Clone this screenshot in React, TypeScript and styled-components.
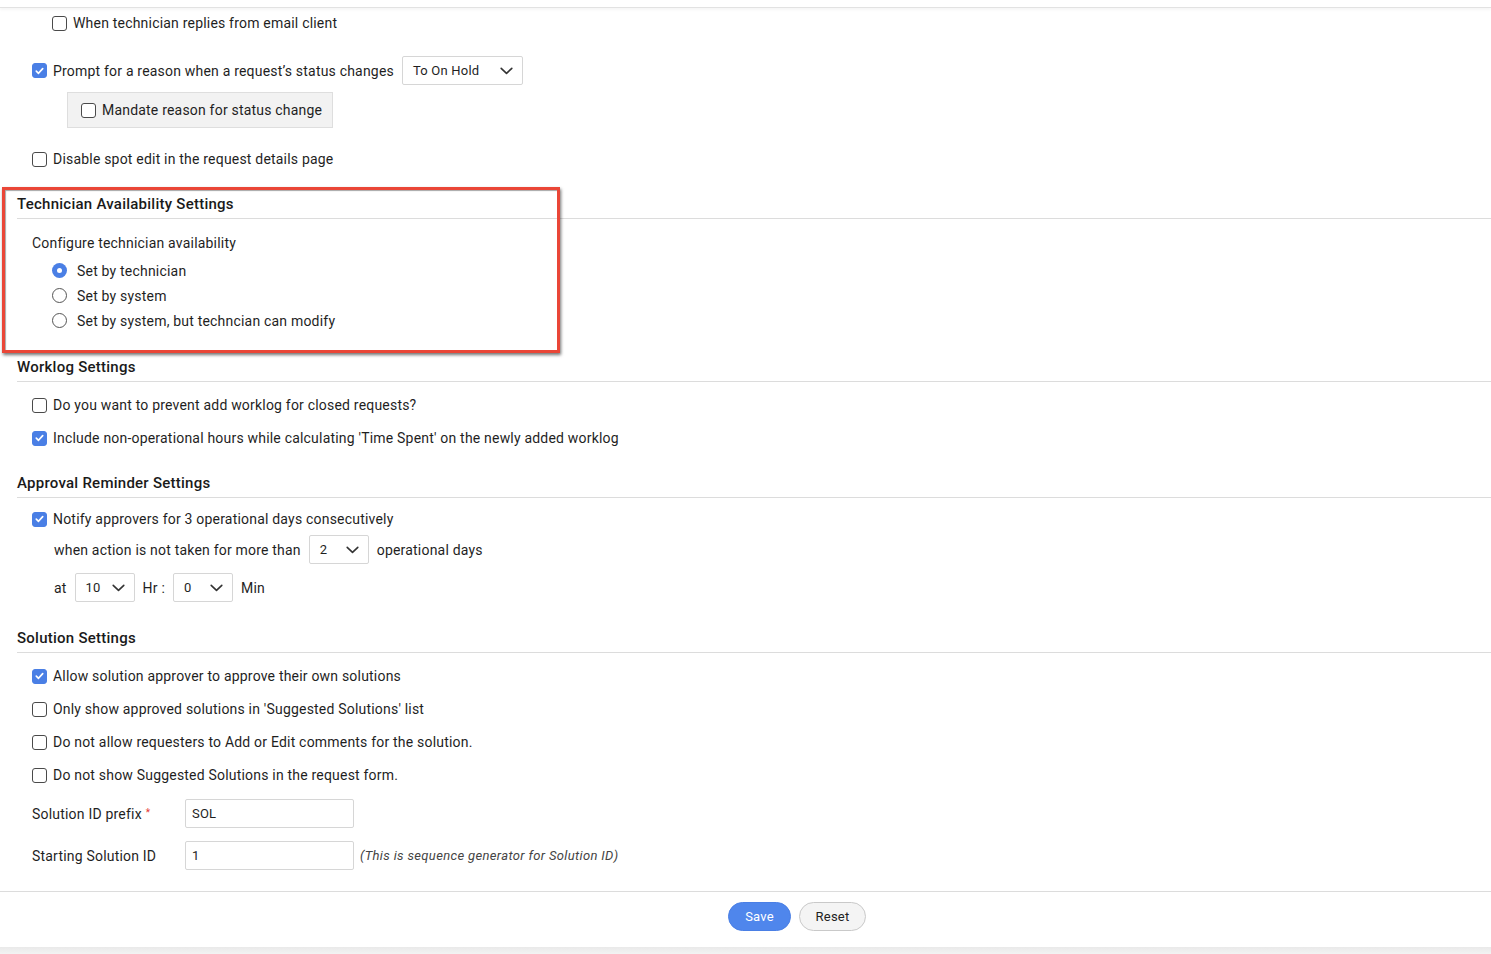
import React from "react";
import styled, { createGlobalStyle, css } from "styled-components";

const FONT = `"Roboto", "Noto Sans", sans-serif`;

const Global = createGlobalStyle`
  html, body { margin: 0; padding: 0; background: #fff; }
  body { font-family: ${FONT}; font-size: 14px; letter-spacing: 0.2px; color: #1f1f1f; }
  * { box-sizing: border-box; }
`;

const Page = styled.div`
  width: 1491px;
  height: 954px;
  overflow: hidden;
  display: flex;
  flex-direction: column;
  background: #fff;
`;

const TopRule = styled.div`
  flex: none;
  height: 8px;
  border-bottom: 1px solid #e2e2e2;
  box-shadow: 0 2px 3px rgba(0, 0, 0, 0.04);
`;

const Row = styled.div<{ $mt: number; $left: number; $h?: number; $gap?: number }>`
  flex: none;
  display: flex;
  align-items: center;
  margin-top: ${(p) => p.$mt}px;
  padding-left: ${(p) => p.$left}px;
  height: ${(p) => p.$h ?? 24}px;
  gap: ${(p) => p.$gap ?? 6}px;
  white-space: nowrap;
`;

const Label = styled.span<{ $ml?: number }>`
  margin-left: ${(p) => p.$ml ?? 0}px;
  line-height: 1;
`;

const Box = styled.span<{ $on?: boolean }>`
  width: 15px;
  height: 15px;
  border-radius: 3px;
  flex: none;
  display: inline-flex;
  align-items: center;
  justify-content: center;
  ${(p) =>
    p.$on
      ? css`
          background: #4a7fe5;
          border: 1px solid #4a7fe5;
        `
      : css`
          background: #fff;
          border: 1px solid #4a4a4a;
        `}
`;

const Check = ({ on }: { on?: boolean }) => (
  <Box $on={on}>
    {on && (
      <svg width="9" height="8" viewBox="0 0 9 8">
        <path d="M1.3 4.2 L3.5 6.3 L7.7 1.6" fill="none" stroke="#fff" strokeWidth="1.7" strokeLinecap="round" strokeLinejoin="round" />
      </svg>
    )}
  </Box>
);

const RadioDot = styled.span<{ $on?: boolean }>`
  width: 15px;
  height: 15px;
  border-radius: 50%;
  flex: none;
  display: inline-flex;
  align-items: center;
  justify-content: center;
  ${(p) =>
    p.$on
      ? css`
          background: #4a7fe5;
          &::after {
            content: "";
            width: 5px;
            height: 5px;
            border-radius: 50%;
            background: #fff;
          }
        `
      : css`
          border: 1px solid #555;
          background: #fff;
        `}
`;

const SubBox = styled.div`
  flex: none;
  margin-top: 7px;
  margin-left: 67px;
  width: 266px;
  height: 36px;
  background: #f2f2f2;
  border: 1px solid #dedede;
  display: flex;
  align-items: center;
  padding-left: 13px;
  gap: 6px;
`;

const SectionHead = styled.div<{ $mt: number }>`
  flex: none;
  margin-top: ${(p) => p.$mt}px;
  margin-left: 17px;
  height: 30px;
  border-bottom: 1px solid #dcdcdc;
  display: flex;
  align-items: center;
  font-size: 15px;
  font-weight: 500;
  letter-spacing: 0.25px;
  color: #1a1a1a;
`;

const Highlight = styled.div`
  flex: none;
  position: relative;
  margin-top: 18px;
`;

const RedFrame = styled.div`
  position: absolute;
  left: 2px;
  top: -2px;
  width: 558px;
  height: 166px;
  border: 3px solid #ea4637;
  box-shadow: 1px 2px 3px rgba(0, 0, 0, 0.55), inset 1px 1px 1px rgba(0, 0, 0, 0.35);
  pointer-events: none;
`;

const SelectBox = styled.div<{ $w: number }>`
  width: ${(p) => p.$w}px;
  height: 29px;
  border: 1px solid #d6d6d6;
  border-radius: 2px;
  background: #fff;
  display: flex;
  align-items: center;
  justify-content: space-between;
  padding: 0 9px 0 10px;
  font-size: 13px;
  flex: none;
`;

const Chevron = () => (
  <svg width="13" height="8" viewBox="0 0 13 8">
    <path d="M1.2 1.3 L6.5 6.4 L11.8 1.3" fill="none" stroke="#333" strokeWidth="1.6" strokeLinecap="round" strokeLinejoin="round" />
  </svg>
);

const Select = ({ w, value }: { w: number; value: string }) => (
  <SelectBox $w={w}>
    <span>{value}</span>
    <Chevron />
  </SelectBox>
);

const FieldRow = styled.div<{ $mt: number }>`
  flex: none;
  display: flex;
  align-items: center;
  margin-top: ${(p) => p.$mt}px;
  padding-left: 32px;
  height: 29px;
`;

const FieldLabel = styled.div`
  width: 153px;
  display: flex;
  align-items: center;
  gap: 4px;
`;

const Req = styled.span`
  color: #e53935;
  font-size: 10px;
  margin-top: -3px;
`;

const TextInput = styled.div`
  width: 169px;
  height: 29px;
  border: 1px solid #d6d6d6;
  border-radius: 2px;
  display: flex;
  align-items: center;
  padding-left: 6px;
  font-size: 13px;
`;

const Note = styled.span`
  margin-left: 6px;
  font-style: italic;
  font-size: 13px;
  letter-spacing: 0.35px;
  color: #444;
`;

const Footer = styled.div`
  flex: none;
  margin-top: 21px;
  border-top: 1px solid #dcdcdc;
  padding-top: 10px;
  padding-bottom: 16px;
  display: flex;
  justify-content: center;
  gap: 8px;
  padding-left: 103px;
`;

const Btn = styled.button<{ $primary?: boolean }>`
  height: 29px;
  border-radius: 15px;
  font-family: ${FONT};
  font-size: 13px;
  letter-spacing: 0.2px;
  padding: 0;
  ${(p) =>
    p.$primary
      ? css`
          width: 63px;
          background: #4f86ec;
          border: 1px solid #4a7fe5;
          color: #fff;
        `
      : css`
          width: 67px;
          background: #f4f4f4;
          border: 1px solid #c9c9c9;
          color: #222;
        `}
`;

const BottomBand = styled.div`
  flex: 1;
  background: linear-gradient(#e9e9e9, #f3f3f3);
`;

export default function App() {
  return (
    <>
      <Global />
      <Page>
        <TopRule />
        <Row $mt={3} $left={52}>
          <Check />
          <Label>When technician replies from email client</Label>
        </Row>
        <Row $mt={21} $left={32} $h={29}>
          <Check on />
          <Label>Prompt for a reason when a request’s status changes</Label>
          <Label $ml={2}>
            <Select w={121} value="To On Hold" />
          </Label>
        </Row>
        <SubBox>
          <Check />
          <Label>Mandate reason for status change</Label>
        </SubBox>
        <Row $mt={19} $left={32}>
          <Check />
          <Label>Disable spot edit in the request details page</Label>
        </Row>

        <Highlight>
          <RedFrame />
          <SectionHead $mt={0}>Technician Availability Settings</SectionHead>
          <Row $mt={12} $left={32}>
            <Label>Configure technician availability</Label>
          </Row>
          <Row $mt={3} $left={52} $h={25} $gap={10}>
            <RadioDot $on />
            <Label>Set by technician</Label>
          </Row>
          <Row $mt={0} $left={52} $h={25} $gap={10}>
            <RadioDot />
            <Label>Set by system</Label>
          </Row>
          <Row $mt={0} $left={52} $h={25} $gap={10}>
            <RadioDot />
            <Label>Set by system, but techncian can modify</Label>
          </Row>
        </Highlight>

        <SectionHead $mt={19}>Worklog Settings</SectionHead>
        <Row $mt={11} $left={32}>
          <Check />
          <Label>Do you want to prevent add worklog for closed requests?</Label>
        </Row>
        <Row $mt={9} $left={32}>
          <Check on />
          <Label>Include non-operational hours while calculating 'Time Spent' on the newly added worklog</Label>
        </Row>

        <SectionHead $mt={18}>Approval Reminder Settings</SectionHead>
        <Row $mt={9} $left={32}>
          <Check on />
          <Label>Notify approvers for 3 operational days consecutively</Label>
        </Row>
        <Row $mt={4} $left={54} $h={29} $gap={8}>
          <Label>when action is not taken for more than</Label>
          <Select w={60} value="2" />
          <Label>operational days</Label>
        </Row>
        <Row $mt={9} $left={54} $h={29} $gap={8}>
          <Label>at</Label>
          <Select w={60} value="10" />
          <Label>Hr :</Label>
          <Select w={60} value="0" />
          <Label>Min</Label>
        </Row>

        <SectionHead $mt={21}>Solution Settings</SectionHead>
        <Row $mt={11} $left={32}>
          <Check on />
          <Label>Allow solution approver to approve their own solutions</Label>
        </Row>
        <Row $mt={9} $left={32}>
          <Check />
          <Label>Only show approved solutions in 'Suggested Solutions' list</Label>
        </Row>
        <Row $mt={9} $left={32}>
          <Check />
          <Label>Do not allow requesters to Add or Edit comments for the solution.</Label>
        </Row>
        <Row $mt={9} $left={32}>
          <Check />
          <Label>Do not show Suggested Solutions in the request form.</Label>
        </Row>

        <FieldRow $mt={12}>
          <FieldLabel>
            <span>Solution ID prefix</span>
            <Req>*</Req>
          </FieldLabel>
          <TextInput>SOL</TextInput>
        </FieldRow>
        <FieldRow $mt={13}>
          <FieldLabel>
            <span>Starting Solution ID</span>
          </FieldLabel>
          <TextInput>1</TextInput>
          <Note>(This is sequence generator for Solution ID)</Note>
        </FieldRow>

        <Footer>
          <Btn $primary>Save</Btn>
          <Btn>Reset</Btn>
        </Footer>
        <BottomBand />
      </Page>
    </>
  );
}
